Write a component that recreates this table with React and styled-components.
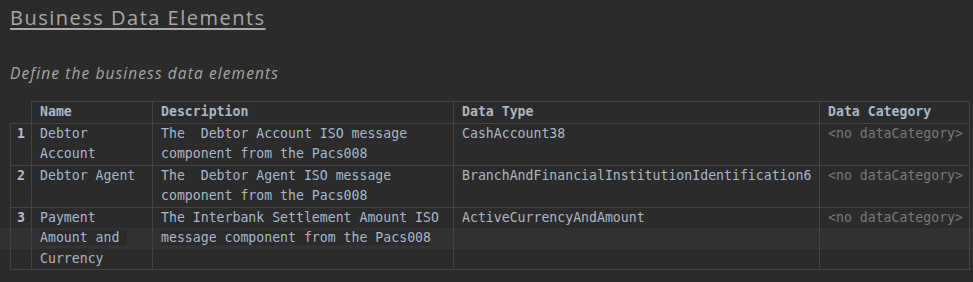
import React from "react";
import styled, { createGlobalStyle } from "styled-components";

const rows = [
  {
    id: 1,
    name: "Debtor Account",
    description: "The  Debtor Account ISO message component from the Pacs008",
    dataType: "CashAccount38",
  },
  {
    id: 2,
    name: "Debtor Agent",
    description: "The  Debtor Agent ISO message component from the Pacs008",
    dataType: "BranchAndFinancialInstitutionIdentification6",
  },
  {
    id: 3,
    name: "Payment Amount and Currency",
    description: "The Interbank Settlement Amount ISO message component from the Pacs008",
    dataType: "ActiveCurrencyAndAmount",
  },
];

const GlobalStyle = createGlobalStyle`
  html, body {
    margin: 0;
    padding: 0;
    background: #2b2b2b;
  }
`;

const Page = styled.main`
  position: relative;
  width: 973px;
  height: 282px;
  overflow: hidden;
  background: #2b2b2b;
  padding: 7px 0 0 10px;
  box-sizing: border-box;
`;

const Title = styled.h1`
  margin: 0;
  font-family: "Open Sans", sans-serif;
  font-weight: 400;
  font-size: 20px;
  line-height: 22px;
  letter-spacing: 1.5px;
  color: #a8a8a8;
  text-decoration: underline;
  text-decoration-thickness: 2px;
  text-underline-offset: 3px;
`;

const Subtitle = styled.p`
  margin: 34px 0 0 0;
  font-family: "Open Sans", sans-serif;
  font-style: italic;
  font-size: 15.5px;
  line-height: 20px;
  letter-spacing: 1.1px;
  color: #a6a6a6;
`;

const TableWrap = styled.div`
  position: relative;
  margin-top: 18px;
`;

// editor caret-line highlight, sits behind the table
const CaretLine = styled.div`
  position: absolute;
  left: -10px;
  right: 0;
  top: ${({ $top }) => $top}px;
  height: 21px;
  background: #323232;
`;

const Table = styled.table`
  position: relative;
  border-collapse: collapse;
  table-layout: fixed;
  width: 959px;
  font-family: "DejaVu Sans Mono", monospace;
  font-size: 13.2px;
  line-height: 20.5px;
  color: #a9b7c6;
`;

const Th = styled.th`
  text-align: left;
  font-weight: 700;
  padding: 0 8px;
  border: 1px solid #454545;
  ${({ $blank }) => $blank && "border: none;"}
`;

const Td = styled.td`
  vertical-align: top;
  padding: 0 7px 0 8px;
  border: 1px solid #454545;
  color: ${({ $muted }) => ($muted ? "#7a7a7a" : "#a9b7c6")};
  white-space: ${({ $nowrap }) => ($nowrap ? "pre" : "pre-wrap")};
`;

const RowNum = styled(Td)`
  padding: 0;
  text-align: center;
  font-weight: 700;
  color: #b4bcc4;
`;

const Text = styled.span`
  background: #2b2b2b;
`;

export default function App() {
  return (
    <>
      <GlobalStyle />
      <Page>
        <Title>Business Data Elements</Title>
        <Subtitle>Define the business data elements</Subtitle>
        <TableWrap>
          <CaretLine $top={127} />
          <Table>
            <colgroup>
              <col style={{ width: 21 }} />
              <col style={{ width: 121 }} />
              <col style={{ width: 301 }} />
              <col style={{ width: 366 }} />
              <col style={{ width: 150 }} />
            </colgroup>
            <thead>
              <tr>
                <Th $blank />
                <Th>Name</Th>
                <Th>Description</Th>
                <Th>Data Type</Th>
                <Th>Data Category</Th>
              </tr>
            </thead>
            <tbody>
              {rows.map((row) => (
                <tr key={row.id}>
                  <RowNum>{row.id}</RowNum>
                  <Td>
                    <Text>{row.name}</Text>
                  </Td>
                  <Td>
                    <Text>{row.description}</Text>
                  </Td>
                  <Td $nowrap>
                    <Text>{row.dataType}</Text>
                  </Td>
                  <Td $muted $nowrap>
                    <Text>&lt;no dataCategory&gt;</Text>
                  </Td>
                </tr>
              ))}
            </tbody>
          </Table>
        </TableWrap>
      </Page>
    </>
  );
}
